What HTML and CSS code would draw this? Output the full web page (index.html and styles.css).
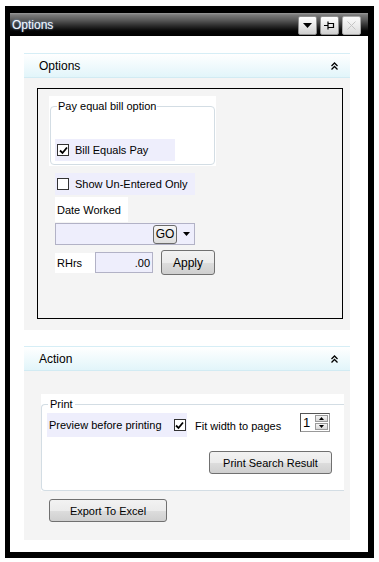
FILE: index.html
```html
<!DOCTYPE html>
<html>
<head>
<meta charset="utf-8">
<link rel="stylesheet" href="styles.css">
</head>
<body>
<div class="frame">
  <div class="titlebar">
    <span class="title">Options</span>
    <div class="tbtns">
      <div class="tbtn"><svg width="9" height="5" viewBox="0 0 9 5"><path d="M0 0H9L4.5 5Z" fill="#000"/></svg></div>
      <div class="tbtn"><svg width="11" height="9" viewBox="0 0 11 9"><path d="M0 4.5H4M4 0.5V8.5M4 2.5H9.5V6.5H4" stroke="#000" stroke-width="1.2" fill="none"/></svg></div>
      <div class="tbtn dis"><svg width="9" height="9" viewBox="0 0 9 9"><path d="M0.5 0.5L8.5 8.5M8.5 0.5L0.5 8.5" stroke="#c4c4c4" stroke-width="1"/></svg></div>
    </div>
  </div>
  <div class="content">
    <section class="panel">
      <div class="phead"><span>Options</span><svg class="chev" width="7" height="8" viewBox="0 0 7 8"><path d="M0.5 4L3.5 1L6.5 4M0.5 7.5L3.5 4.5L6.5 7.5" stroke="#000" stroke-width="1.3" fill="none"/></svg></div>
      <div class="pbody pbody1">
        <div class="box">
          <div class="grpwrap">
            <fieldset class="grp grp1">
              <legend>Pay equal bill option</legend>
              <div class="crow crow1"><span class="cb"><svg width="9" height="9" viewBox="0 0 9 9"><path d="M1 4.5L3.5 7L8 1.5" stroke="#000" stroke-width="1.8" fill="none"/></svg></span><span>Bill Equals Pay</span></div>
            </fieldset>
          </div>
          <div class="crow crow2"><span class="cb"></span><span>Show Un-Entered Only</span></div>
          <div class="lbl lbl-date">Date Worked</div>
          <div class="dinput"><span class="gobtn">GO</span><svg class="ddarr" width="7" height="4" viewBox="0 0 7 4"><path d="M0 0H7L3.5 4Z" fill="#000"/></svg></div>
          <div class="rrow">
            <span class="lbl lbl-rh">RHrs</span>
            <span class="ninput">.00</span>
            <span class="btn btn-apply">Apply</span>
          </div>
        </div>
      </div>
    </section>
    <section class="panel panel2">
      <div class="phead"><span>Action</span><svg class="chev" width="7" height="8" viewBox="0 0 7 8"><path d="M0.5 4L3.5 1L6.5 4M0.5 7.5L3.5 4.5L6.5 7.5" stroke="#000" stroke-width="1.3" fill="none"/></svg></div>
      <div class="pbody pbody2">
        <div class="grpwrap2">
          <fieldset class="grp grp2">
            <legend>Print</legend>
            <div class="prow">
              <div class="crow crow3"><span>Preview before printing</span><span class="cb"><svg width="9" height="9" viewBox="0 0 9 9"><path d="M1 4.5L3.5 7L8 1.5" stroke="#000" stroke-width="1.8" fill="none"/></svg></span></div>
              <span class="fit">Fit width to pages</span>
              <div class="spin"><span class="sval">1</span><div class="sbtns"><span class="sb"><svg width="5" height="3" viewBox="0 0 5 3"><path d="M0 3H5L2.5 0Z" fill="#000"/></svg></span><span class="sb"><svg width="5" height="3" viewBox="0 0 5 3"><path d="M0 0H5L2.5 3Z" fill="#000"/></svg></span></div></div>
            </div>
            <div class="psrow"><span class="btn btn-psr">Print Search Result</span></div>
          </fieldset>
        </div>
        <span class="btn btn-exp">Export To Excel</span>
      </div>
    </section>
  </div>
</div>
</body>
</html>
```
FILE: styles.css
```css
html, body {
  margin: 0;
  background: #fff;
}
body {
  padding: 6px 0 0 5px;
  font-family: "Liberation Sans", Arial, sans-serif;
  font-size: 11px;
  color: #000;
}
.frame {
  width: 358px;
  height: 539px;
  border-style: solid;
  border-color: #000;
  border-width: 7px 6px 6px 5px;
  background: #fff;
}
.titlebar {
  height: 23px;
  display: flex;
  justify-content: space-between;
  align-items: flex-start;
  background: linear-gradient(#9a9a9a 0px, #7a7a7a 2px, #5a5a5a 7px, #2a2a2a 13px, #050505 18px, #000 23px);
}
.title {
  color: #f4f8ff;
  font-size: 12px;
  line-height: 14px;
  padding: 5px 0 0 2px;
  text-shadow: 0 0 2px #7aa6d8;
}
.tbtns {
  display: flex;
  gap: 3px;
  padding: 3px 7px 0 0;
}
.tbtn {
  width: 17px;
  height: 17px;
  border: 1px solid #8e8e8e;
  border-radius: 2px;
  background: linear-gradient(#ffffff, #e8e8e8 50%, #cfcfcf);
  display: flex;
  align-items: center;
  justify-content: center;
}
.tbtn.dis {
  background: linear-gradient(#fafafa, #ececec 50%, #dadada);
  border-color: #a8a8a8;
}
.content {
  padding: 17px 18px 0 14px;
}
.panel2 {
  margin-top: 16px;
}
.phead {
  height: 23px;
  border-top: 1px solid #d6eef6;
  border-bottom: 1px solid #d2ebf3;
  background: linear-gradient(#ffffff, #f3fbfd 40%, #e2f5fa);
  display: flex;
  align-items: center;
  justify-content: space-between;
  padding: 0 12px 0 15px;
  font-size: 12px;
}
.chev {
  margin-top: 1px;
}
.pbody {
  background: #f4f4f4;
}
.pbody1 {
  height: 252px;
  padding: 10px 7px 0 13px;
  box-sizing: border-box;
}
.box {
  height: 231px;
  border: 1px solid #000;
  box-sizing: border-box;
  padding: 7px 0 0 11px;
  display: flex;
  flex-direction: column;
  align-items: flex-start;
}
.grpwrap {
  width: 167px;
  height: 70px;
  background: #fff;
  padding-top: 3px;
  box-sizing: border-box;
}
.grp {
  margin: 0;
  border: 1px solid #d3dde4;
  border-radius: 4px;
  padding: 0 0 3px 4px;
}
.grp legend {
  padding: 0 1px;
  margin-left: 2px;
  line-height: 14px;
}
.grp1 {
  width: 165px;
  box-sizing: border-box;
  margin-left: 1px;
  height: 66px;
}
.crow {
  background: #eeeefc;
  display: flex;
  align-items: center;
  height: 22px;
  white-space: nowrap;
}
.crow1 {
  width: 120px;
  margin-top: 26px;
  padding-left: 2px;
  box-sizing: border-box;
}
.cb {
  width: 10px;
  height: 10px;
  border: 1px solid #333;
  background: #fff;
  display: flex;
  align-items: center;
  justify-content: center;
  margin-right: 6px;
  flex: none;
}
.crow2 {
  width: 140px;
  margin: 7px 0 0 6px;
  padding-left: 2px;
  box-sizing: border-box;
}
.lbl {
  background: #fff;
  display: flex;
  align-items: center;
  box-sizing: border-box;
}
.lbl-date {
  width: 73px;
  height: 25px;
  margin: 2px 0 0 6px;
  padding-left: 2px;
}
.dinput {
  width: 140px;
  height: 22px;
  margin: 1px 0 0 6px;
  box-sizing: border-box;
  background: #eeeefc;
  border: 1px solid #b2b2c6;
  display: flex;
  align-items: center;
  padding-left: 97px;
}
.gobtn {
  width: 24px;
  height: 19px;
  box-sizing: border-box;
  border: 1px solid #6a6a6a;
  border-radius: 3px;
  background: linear-gradient(#f6f6f6, #dedede);
  display: flex;
  align-items: center;
  justify-content: center;
  font-size: 12px;
}
.ddarr {
  margin-left: 6px;
}
.rrow {
  display: flex;
  align-items: center;
  margin: 5px 0 0 6px;
  height: 25px;
}
.lbl-rh {
  width: 40px;
  height: 20px;
  padding-left: 2px;
}
.ninput {
  width: 58px;
  height: 21px;
  box-sizing: border-box;
  background: #eeeefc;
  border: 1px solid #b2b2c6;
  display: flex;
  align-items: center;
  justify-content: flex-end;
  padding-right: 2px;
}
.btn {
  box-sizing: border-box;
  border: 1px solid #707070;
  border-radius: 3px;
  background: linear-gradient(#f2f2f2, #ebebeb 50%, #dddddd 51%, #cfcfcf);
  display: flex;
  align-items: center;
  justify-content: center;
  font-size: 11px;
  white-space: nowrap;
}
.btn-apply {
  width: 54px;
  height: 25px;
  margin-left: 8px;
  font-size: 12px;
}
.pbody2 {
  height: 169px;
  padding: 23px 0 0 17px;
  box-sizing: border-box;
  display: flex;
  flex-direction: column;
  align-items: flex-start;
}
.grpwrap2 {
  width: 303px;
  height: 97px;
  background: #fff;
  padding-top: 3px;
  box-sizing: border-box;
}
.grp2 {
  width: 303px;
  height: 94px;
  box-sizing: border-box;
  border-right: none;
  border-top-right-radius: 0;
  border-bottom-right-radius: 0;
  padding: 0 0 0 5px;
}
.grp2 legend {
  padding: 0 2px;
  margin-left: 1px;
}
.prow {
  display: flex;
  align-items: flex-start;
  margin-top: 2px;
}
.crow3 {
  width: 140px;
  height: 24px;
  padding-left: 2px;
  box-sizing: border-box;
}
.crow3 .cb {
  margin: 0 0 0 12px;
}
.fit {
  margin: 7px 0 0 8px;
  width: 105px;
  white-space: nowrap;
}
.spin {
  width: 30px;
  height: 19px;
  box-sizing: border-box;
  border: 1px solid #555;
  border-right-color: #999;
  border-bottom-color: #999;
  background: #fff;
  display: flex;
  align-items: center;
  justify-content: space-between;
  padding: 0 1px 0 2px;
}
.sval {
  font-size: 13px;
  line-height: 15px;
}
.sbtns {
  display: flex;
  flex-direction: column;
  gap: 1px;
}
.sb {
  width: 13px;
  height: 7px;
  box-sizing: border-box;
  border: 1px solid #9a9a9a;
  background: linear-gradient(#f4f4f4, #d8d8d8);
  display: flex;
  align-items: center;
  justify-content: center;
}
.psrow {
  display: flex;
  justify-content: flex-end;
  padding-right: 12px;
  margin-top: 14px;
}
.btn-psr {
  width: 123px;
  height: 23px;
}
.btn-exp {
  width: 118px;
  height: 23px;
  margin: 8px 0 0 8px;
}
```
